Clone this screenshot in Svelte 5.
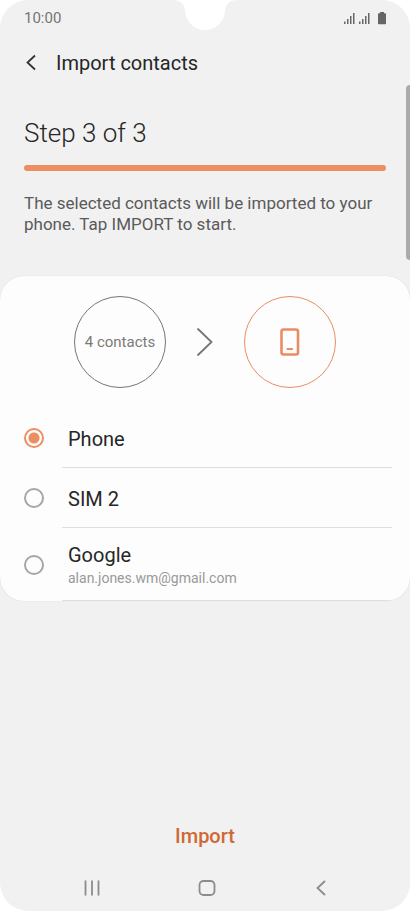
<script>
  const targets = [
    { id: 'phone', label: 'Phone' },
    { id: 'sim2', label: 'SIM 2' },
    { id: 'google', label: 'Google', detail: 'alan.jones.wm@gmail.com' }
  ];
  let selected = $state('phone');
</script>

<div class="screen">
  <svg class="notch" width="66" height="31" viewBox="0 0 66 31" aria-hidden="true">
    <path d="M0 0C8 0 12 3 13 10A20 20 0 0 0 53 10C54 3 58 0 66 0Z" fill="#fff" />
  </svg>
  <div class="scrollbar"></div>

  <div class="status">
    <span>10:00</span>
    <svg width="43" height="14" viewBox="0 0 43 14" aria-hidden="true">
      <g fill="#666">
        <path d="M0 10.500h1.500V13H0zM3 8h1.500v5H3zM6 5h1.500v8H6zM9 2h1.500v11H9z" />
        <path d="M15 10.500h1.500V13H15zM18 8h1.500v5H18zM21 5h1.500v8H21zM24 2h1.500v11H24z" />
        <path d="M36 1h4v1.300h1.300q.7 0 .7.700v9.500q0 .7-.7.700h-6.600q-.7 0-.7-.700V3q0-.7.700-.700H36z" />
      </g>
    </svg>
  </div>

  <header>
    <button class="back" aria-label="Back">
      <svg width="12" height="18" viewBox="0 0 12 18"><path d="M10 1.500L2.500 8.500l7.500 7" fill="none" stroke="#333" stroke-width="1.800" /></svg>
    </button>
    <h1>Import contacts</h1>
  </header>

  <main>
    <section class="intro">
      <h2>Step 3 of 3</h2>
      <div class="bar"></div>
      <p>The selected contacts will be imported to your phone. Tap IMPORT to start.</p>
    </section>

    <section class="card">
      <div class="transfer">
        <div class="circle">4 contacts</div>
        <svg width="18" height="30" viewBox="0 0 18 30" aria-hidden="true">
          <path d="M2 2L15.500 15 2 28" fill="none" stroke="#757575" stroke-width="1.800" stroke-linecap="round" />
        </svg>
        <div class="circle accent">
          <svg width="20" height="28" viewBox="0 0 20 28" aria-hidden="true">
            <rect x="1.500" y="1.500" width="16.500" height="25" rx="2" fill="none" stroke="#e88d62" stroke-width="2.600" />
            <path d="M7.500 21h4.500" stroke="#e88d62" stroke-width="2.200" stroke-linecap="round" />
          </svg>
        </div>
      </div>
      {#each targets as t (t.id)}
        <label class="option" class:tall={t.detail}>
          <input type="radio" name="target" value={t.id} bind:group={selected} />
          <span class="text">
            <span class="name">{t.label}</span>
            {#if t.detail}<span class="detail">{t.detail}</span>{/if}
          </span>
        </label>
      {/each}
    </section>
  </main>

  <footer>
    <button class="import">Import</button>
    <nav>
      <button aria-label="Recent apps">
        <svg width="18" height="18" viewBox="0 0 18 18"><path d="M2.500 1.500v15M9 1.500v15M15.500 1.500v15" stroke="#8c8c8c" stroke-width="1.800" /></svg>
      </button>
      <button aria-label="Home">
        <svg width="18" height="18" viewBox="0 0 18 18"><rect x="1.500" y="2" width="15" height="14" rx="4" fill="none" stroke="#8c8c8c" stroke-width="1.800" /></svg>
      </button>
      <button aria-label="Back">
        <svg width="18" height="18" viewBox="0 0 18 18"><path d="M13 2L5.500 9l7.500 7" fill="none" stroke="#8c8c8c" stroke-width="1.800" /></svg>
      </button>
    </nav>
  </footer>
</div>

<style>
  :global(body) {
    background: #fff;
  }
  .screen {
    position: relative;
    box-sizing: border-box;
    min-height: 100vh;
    display: flex;
    flex-direction: column;
    overflow: hidden;
    border-radius: 28px;
    background: #f1f1f1;
    color: #262626;
    font-family: Roboto, sans-serif;
  }
  .notch {
    position: absolute;
    top: 0;
    left: 50%;
    transform: translateX(-50%);
  }
  .scrollbar {
    position: absolute;
    top: 85px;
    right: 0;
    width: 4px;
    height: 175px;
    border-radius: 4px 0 0 4px;
    background: #aaa;
  }
  button {
    display: flex;
    align-items: center;
    justify-content: center;
    padding: 0;
    border: 0;
    background: none;
    font: inherit;
    cursor: pointer;
  }
  .status {
    display: flex;
    align-items: center;
    justify-content: space-between;
    height: 36px;
    padding: 0 23px 0 24px;
    color: #757575;
    font-size: 15px;
  }
  header {
    display: flex;
    align-items: center;
    gap: 18px;
    height: 54px;
    padding: 0 24px;
  }
  .back {
    width: 14px;
    height: 32px;
  }
  h1,
  h2,
  p {
    margin: 0;
  }
  h1 {
    font-size: 20px;
    font-weight: 400;
    line-height: 24px;
  }
  main {
    flex: 1;
  }
  .intro {
    padding: 28px 24px 41px;
  }
  h2 {
    font-size: 26px;
    font-weight: 300;
    line-height: 30px;
  }
  .bar {
    height: 6px;
    margin: 17px 0 22px;
    border-radius: 3px;
    background: #ed8e60;
  }
  p {
    color: #5a5a5a;
    font-size: 17px;
    line-height: 21px;
  }
  .card {
    overflow: hidden;
    padding-top: 20px;
    border-radius: 24px;
    background: #fdfdfd;
    box-shadow: 0 0 1px #ccc;
  }
  .transfer {
    display: flex;
    align-items: center;
    justify-content: center;
    gap: 30px;
    margin-bottom: 20px;
  }
  .circle {
    display: flex;
    align-items: center;
    justify-content: center;
    box-sizing: border-box;
    width: 92px;
    height: 92px;
    border: 1px solid #757575;
    border-radius: 50%;
    color: #7a7a7a;
    font-size: 15px;
  }
  .circle.accent {
    border-color: #e88d62;
  }
  .option {
    display: flex;
    align-items: center;
    gap: 18px;
    height: 60px;
    padding: 0 18px 0 24px;
    cursor: pointer;
  }
  .option.tall {
    height: 73px;
  }
  input {
    appearance: none;
    flex: none;
    box-sizing: border-box;
    width: 20px;
    height: 20px;
    margin: 0;
    border: 2px solid #a6a6a6;
    border-radius: 50%;
  }
  input:checked {
    border-color: #ed8e60;
    background: radial-gradient(circle, #ed8e60 5px, transparent 6px);
  }
  .text {
    flex: 1;
    display: flex;
    flex-direction: column;
    justify-content: center;
    box-sizing: border-box;
    height: 100%;
    padding: 2px 0 0 6px;
    border-bottom: 1px solid #dedede;
  }
  .name {
    font-size: 20px;
    line-height: 26px;
  }
  .detail {
    color: #999;
    font-size: 14px;
    line-height: 20px;
  }
  .import {
    height: 40px;
    margin: 0 auto;
    padding: 0 16px;
    color: #cf6835;
    font-size: 20px;
    font-weight: 500;
  }
  nav {
    display: flex;
    justify-content: space-between;
    padding: 14px 77px 5px 80px;
  }
  nav button {
    width: 24px;
    height: 36px;
  }
</style>
